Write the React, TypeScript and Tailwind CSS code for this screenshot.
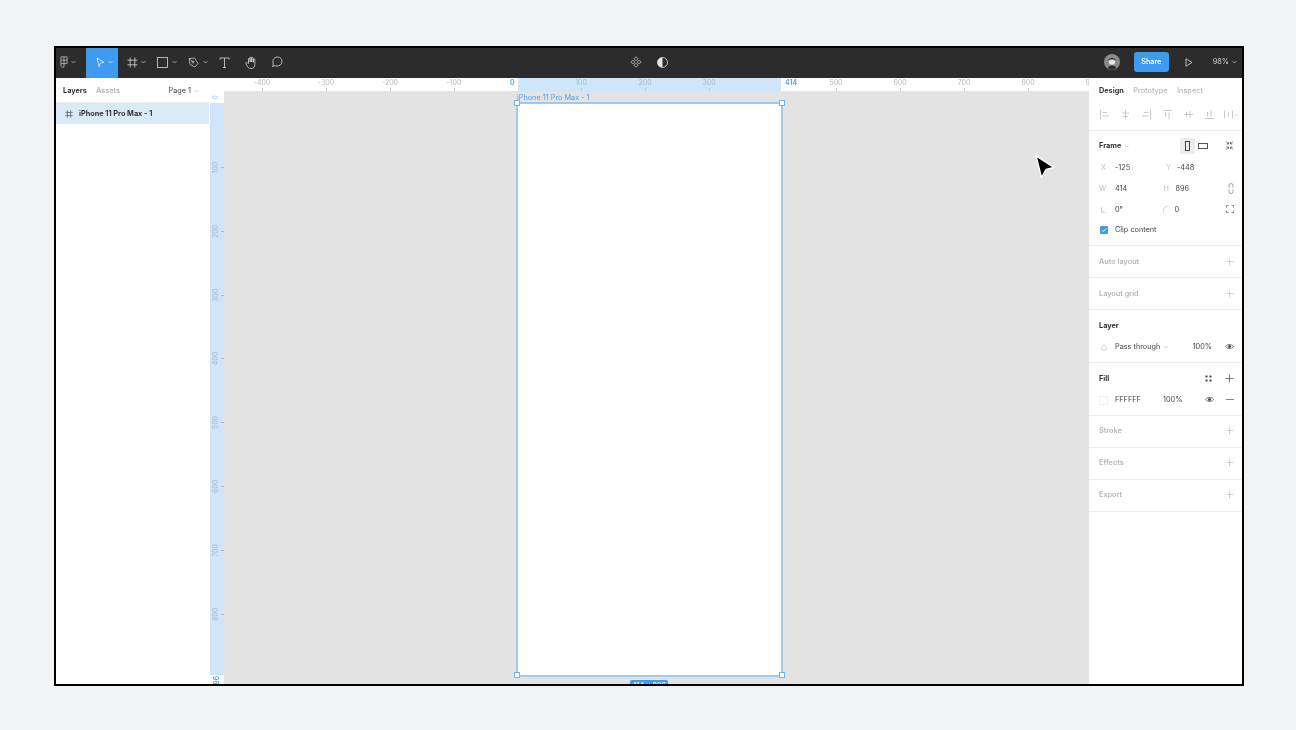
import React from "react";

const S = ({ w = 12, h = 12, vb = "0 0 12 12", c = "currentColor", sw = 0.8, children }: any) => (
  <svg width={w} height={h} viewBox={vb} fill="none" stroke={c} strokeWidth={sw} className="shrink-0">
    {children}
  </svg>
);

const Chev = ({ c = "#bdbdbd" }: { c?: string }) => (
  <svg width="5" height="4" viewBox="0 0 5 4" fill="none" stroke={c} strokeWidth="0.7" className="shrink-0">
    <path d="M0.5 1 L2.5 3 L4.5 1" />
  </svg>
);

const Plus = ({ c = "#bdbdbd" }: { c?: string }) => (
  <S w={9} h={9} vb="0 0 9 9" c={c} sw={0.7}>
    <path d="M4.5 0.5V8.5M0.5 4.5H8.5" />
  </S>
);

const Eye = () => (
  <div className="-translate-y-[1px]">
    <S w={9} h={7} vb="0 0 9 7" c="#444" sw={0.7}>
      <path d="M0.5 3.5C2.5 0.8 6.5 0.8 8.5 3.5C6.5 6.2 2.5 6.2 0.5 3.5Z" />
      <circle cx="4.5" cy="3.5" r="1.2" fill="#444" />
    </S>
  </div>
);

const Tool = ({ w, active, cls = "", children }: any) => (
  <div className={`h-full flex items-center justify-center gap-[3px] shrink-0 ${active ? "bg-[#3f9bf0]" : ""} ${cls}`} style={{ width: w }}>
    {children}
  </div>
);

const Section = ({ title, cls = "" }: { title: string; cls?: string }) => (
  <div className={`h-[32px] flex items-center justify-between pl-[10px] pr-[8px] border-b border-[#ececec] shrink-0 text-[#b5b5b5] font-semibold ${cls}`}>
    <span>{title}</span>
    <Plus />
  </div>
);

const Prop = ({ l, v, w = 66, lw = 16 }: { l: React.ReactNode; v: string; w?: number; lw?: number }) => (
  <div className="flex items-center" style={{ width: w }}>
    <span className="text-[#c4c4c4] flex items-center" style={{ width: lw }}>{l}</span>
    <span className="text-[#444]">{v}</span>
  </div>
);

const topLabels: [string, number, string][] = [
  ["-400", 38, "#b8b8b8"], ["-300", 102, "#b8b8b8"], ["-200", 166, "#b8b8b8"], ["-100", 230, "#b8b8b8"],
  ["100", 357, "#a5bccd"], ["200", 421, "#a5bccd"], ["300", 485, "#a5bccd"],
  ["500", 612, "#b8b8b8"], ["600", 676, "#b8b8b8"], ["700", 740, "#b8b8b8"], ["800", 804, "#b8b8b8"], ["900", 868, "#b8b8b8"],
];

const leftLabels: [string, number][] = [
  ["100", 64], ["200", 128], ["300", 192], ["400", 255], ["500", 319], ["600", 383], ["700", 447], ["800", 511],
];

const Handle = ({ cls }: { cls: string }) => (
  <div className={`absolute w-[6px] h-[6px] bg-white border border-[#6fb6ee] ${cls}`} />
);

export default function App() {
  return (
    <div className="w-[1296px] h-[730px] bg-[#f1f3f5] pt-[46px] pl-[54px] overflow-hidden blur-[0.35px]" style={{ fontFamily: "Inter, 'Liberation Sans', sans-serif" }}>
      <div className="w-[1190px] h-[640px] border-2 border-black bg-white flex flex-col overflow-hidden text-[7.3px] leading-none text-[#333]">
        {/* toolbar */}
        <div className="h-[30px] bg-[#2c2c2c] shrink-0 grid grid-cols-[1fr_auto_1fr] items-center">
          <div className="flex items-center h-full">
            <Tool w={30} cls="pr-[6px] pb-[2px]">
              <S w={8} h={12} vb="0 0 9 13" c="#cfcfcf" sw={0.8}>
                <path d="M1 0.7H8V4.5H1ZM4.5 0.7V12M1 4.5V8.3H8V4.5M1 8.3V10.5C1 11.6 2 12.3 3 12.3H4.5" />
              </S>
              <Chev c="#cfcfcf" />
            </Tool>
            <Tool w={32} active cls="pl-[4px] pb-[2px]">
              <S w={9} h={11} vb="0 0 9 11" c="#fff" sw={0.7}>
                <path d="M1 1L8 5.2L4.6 6L3 9.6Z" />
              </S>
              <Chev c="#fff" />
            </Tool>
            <Tool w={32} cls="pl-[5px] pb-[2px]">
              <S w={11} h={11} vb="0 0 11 11" c="#d8d8d8" sw={0.8}>
                <path d="M3.2 0.5V10.5M7.8 0.5V10.5M0.5 3.2H10.5M0.5 7.8H10.5" />
              </S>
              <Chev c="#cfcfcf" />
            </Tool>
            <Tool w={31} cls="pl-[2px] gap-[4px] pb-[2px]">
              <S w={11} h={11} vb="0 0 11 11" c="#d8d8d8" sw={0.8}>
                <rect x="0.5" y="0.5" width="10" height="10" />
              </S>
              <Chev c="#cfcfcf" />
            </Tool>
            <Tool w={29} cls="pl-[4px] gap-[4px] pb-[2px]">
              <S w={11} h={11} vb="0 0 11 11" c="#d8d8d8" sw={0.7}>
                <path d="M1 1.5L6.5 1L10 6.5L7 10L2 7.5ZM1 1.5L4.5 4.5" />
                <circle cx="5" cy="5" r="1" />
              </S>
              <Chev c="#cfcfcf" />
            </Tool>
            <Tool w={28} cls="pb-[2px]">
              <S w={11} h={11} vb="0 0 11 11" c="#d8d8d8" sw={0.8}>
                <path d="M1 2.5V1H10V2.5M5.5 1V10.5M4 10.5H7" />
              </S>
            </Tool>
            <Tool w={26} cls="pb-[2px]">
              <S w={12} h={13} vb="0 0 12 13" c="#d8d8d8" sw={0.8}>
                <path d="M3.5 7.5V3a.8.8 0 0 1 1.6 0V6M5.1 6V1.8a.8.8 0 0 1 1.6 0V6M6.7 6V2.4a.8.8 0 0 1 1.6 0V6.3M8.3 6.3V3.6a.8.8 0 0 1 1.6 0V8.5C9.9 11 8.3 12.5 6 12.5C3.8 12.5 2.8 11.2 1.8 9.4L0.8 7.6C0.4 6.8 1.5 6 2.2 6.7L3.5 8" />
              </S>
            </Tool>
            <Tool w={26} cls="pb-[2px]">
              <S w={12} h={12} vb="0 0 12 12" c="#d8d8d8" sw={0.8}>
                <path d="M1.5 10.5L2.4 8C1.2 5.6 2 1 6.5 1C9.5 1 11 3.2 11 5.5C11 8.5 8.5 10.2 6 10C5.2 10 4.5 9.8 4 9.6Z" />
              </S>
            </Tool>
          </div>
          <div className="flex items-center gap-[15px] pb-[2px]">
            <S w={12} h={12} vb="0 0 12 12" c="#d8d8d8" sw={0.7}>
              <path d="M6 0.8L8 2.8L6 4.8L4 2.8ZM2.8 4L4.8 6L2.8 8L0.8 6ZM9.2 4L11.2 6L9.2 8L7.2 6ZM6 7.2L8 9.2L6 11.2L4 9.2Z" />
            </S>
            <svg width="11" height="11" viewBox="0 0 11 11" className="shrink-0">
              <circle cx="5.5" cy="5.5" r="5" fill="#2c2c2c" stroke="#e6e6e6" strokeWidth="0.8" />
              <path d="M5.5 0.5A5 5 0 0 0 5.5 10.5Z" fill="#e6e6e6" />
            </svg>
          </div>
          <div className="flex items-center justify-end h-full pr-[5px] pb-[2px]">
            <svg width="16" height="16" viewBox="0 0 16 16" className="shrink-0 mr-[14px]">
              <circle cx="8" cy="8" r="8" fill="#8a8a8a" />
              <circle cx="8" cy="7.5" r="3.2" fill="#e4e4e4" />
              <path d="M4.5 6.5C4.5 3 11.5 3 11.5 6.5C10 5 6 5 4.5 6.5Z" fill="#222" />
              <path d="M4 14C5 10.8 11 10.8 12 14C10.5 16.2 5.5 16.2 4 14Z" fill="#2a2a2a" />
            </svg>
            <div className="w-[35px] h-[20px] rounded-[3px] bg-[#3f9bf0] text-white flex items-center justify-center font-medium mr-[16px]">Share</div>
            <S w={8} h={9} vb="0 0 8 9" c="#d8d8d8" sw={0.8}>
              <path d="M1 0.8L7 4.5L1 8.2Z" />
            </S>
            <span className="text-[#d4d4d4] ml-[20px] mr-[3px]">98%</span>
            <Chev c="#cfcfcf" />
          </div>
        </div>

        {/* body */}
        <div className="flex flex-1 min-h-0">
          {/* layers */}
          <div className="w-[154px] shrink-0 bg-white flex flex-col">
            <div className="h-[25px] flex items-center pl-[7px] pr-[11px] pt-[1px] border-b border-[#ececec] shrink-0">
              <span className="font-bold text-[#333]">Layers</span>
              <span className="ml-[9px] text-[#b8b8b8] font-semibold">Assets</span>
              <span className="ml-auto text-[#444] mr-[3px]">Page 1</span>
              <Chev />
            </div>
            <div className="h-[21px] w-[153px] bg-[#d9eaf7] flex items-center pl-[9px] gap-[6px] font-bold text-[#333]">
              <S w={8} h={8} vb="0 0 8 8" c="#555" sw={0.7}>
                <path d="M2.4 0.3V7.7M5.6 0.3V7.7M0.3 2.4H7.7M0.3 5.6H7.7" />
              </S>
              <span>iPhone 11 Pro Max - 1</span>
            </div>
          </div>

          {/* center */}
          <div className="flex-1 min-w-0 flex flex-col">
            {/* top ruler */}
            <div className="h-[13px] shrink-0 relative flex text-[7px] bg-white overflow-hidden">
              <div className="w-[308px] shrink-0" />
              <div className="w-[263px] shrink-0 bg-[#cfe6fa]" />
              {topLabels.map(([t, x, c]) => (
                <React.Fragment key={t}>
                  <span className="absolute top-[1px] -translate-x-1/2" style={{ left: x + 14, color: c }}>{t}</span>
                  <span className="absolute top-[10px] w-px h-[3px] bg-[#c8c8c8]" style={{ left: x + 14 }} />
                </React.Fragment>
              ))}
              <span className="absolute top-[1px] left-[300px] font-semibold text-[#4aa3ee]">0</span>
              <span className="absolute top-[1px] left-[575px] font-semibold text-[#4aa3ee]">414</span>
            </div>
            <div className="flex-1 min-h-0 flex">
              {/* left ruler */}
              <div className="w-[14px] shrink-0 relative overflow-hidden flex flex-col text-[7px] text-[#a5bccd]">
                <div className="h-[12px] shrink-0 bg-white" />
                <div className="flex-1 bg-[#cfe6fa]" />
                <div className="h-[9px] shrink-0 bg-white" />
                <span className="absolute left-[3px] top-[3px] -rotate-90 text-[#a9cdec] leading-none">0</span>
                {leftLabels.map(([t, y]) => (
                  <React.Fragment key={t}>
                    <span className="absolute left-[-3px] w-[16px] text-center -rotate-90" style={{ top: y + 9 }}>{t}</span>
                    <span className="absolute left-[11px] h-px w-[3px] bg-[#b0bcc6]" style={{ top: y + 12 }} />
                  </React.Fragment>
                ))}
                <span className="absolute left-[-2px] w-[16px] text-center top-[588px] -rotate-90 font-semibold text-[#4aa3ee]">896</span>
              </div>
              {/* canvas */}
              <div className="flex-1 min-w-0 bg-[#e3e3e3] relative overflow-hidden">
                <span className="absolute left-[293px] top-[3px] text-[#4aa3ee]">iPhone 11 Pro Max - 1</span>
                <div className="absolute left-[292px] top-[11px] w-[267px] h-[575px] bg-[#9ccbf0] p-[2px]">
                  <div className="w-full h-full bg-white" />
                  <Handle cls="-left-[2px] -top-[2px]" />
                  <Handle cls="-right-[2px] -top-[2px]" />
                  <Handle cls="-left-[2px] -bottom-[1px]" />
                  <Handle cls="-right-[2px] -bottom-[1px]" />
                </div>
                <div className="absolute left-[406px] top-[589px] w-[38px] h-[11px] rounded-[2px] bg-[#3f9bf0] text-white font-semibold text-center pt-[2px] text-[7px]">414 × 896</div>
                {/* cursor */}
                <svg width="24" height="26" viewBox="0 0 24 26" className="absolute left-[809px] top-[63px]">
                  <path d="M3 2L21 13.5L13 15.5L8.5 23.5Z" fill="#000" stroke="#fff" strokeWidth="1.4" strokeLinejoin="round" />
                </svg>
              </div>
            </div>
          </div>

          {/* properties */}
          <div className="w-[153px] shrink-0 bg-white flex flex-col">
            <div className="h-[53px] border-b border-[#ececec] shrink-0 flex flex-col">
              <div className="h-[25px] pt-[1px] flex items-center pl-[10px] gap-[9.5px] font-medium text-[#b8b8b8] shrink-0">
                <span className="font-bold text-[#333]">Design</span>
                <span>Prototype</span>
                <span>Inspect</span>
              </div>
              <div className="flex items-center pl-[11px] gap-[12px] mt-[7px] text-[#bdbdbd]">
                {["M0.5 0V9M2.5 2.5H7M2.5 6H9", "M4.5 0V9M1 3H8M2 6.5H7", "M8.5 0V9M2 2.5H6.5M0 6H6.5", "M0 0.5H9M2.5 2.5V7M6 2.5V9", "M0 4.5H9M2.5 2V7M6 1V8", "M0 8.5H9M2.5 2V6.5M6 0V6.5"].map((d) => (
                  <S key={d} w={9} h={9} vb="0 0 9 9" c="#bdbdbd" sw={0.8}>
                    <path d={d} />
                  </S>
                ))}
                <div className="flex items-center gap-[1px] -ml-[2px]">
                  <S w={9} h={9} vb="0 0 9 9" c="#bdbdbd" sw={0.8}>
                    <path d="M0.5 0.5V8.5M4.5 2.5V6.5M8.5 0.5V8.5" />
                  </S>
                  <Chev />
                </div>
              </div>
            </div>

            <div className="h-[115px] border-b border-[#ececec] shrink-0 pl-[10px] pr-[8px] flex flex-col">
              <div className="h-[20px] mt-[5px] flex items-center shrink-0">
                <span className="font-bold text-[#333] mr-[3px]">Frame</span>
                <Chev />
                <div className="ml-[51px] w-[15px] h-[16px] bg-[#ececec] flex items-center justify-center">
                  <div className="w-[5px] h-[10px] border border-[#444]" />
                </div>
                <div className="ml-[3px] w-[10px] h-[6px] border border-[#555]" />
                <div className="ml-auto -translate-y-[1px]">
                  <S w={9} h={9} vb="0 0 9 9" c="#555" sw={0.8}>
                    <path d="M1 0.5L3.5 3M3.5 1V3H1.5M8 0.5L5.5 3M5.5 1V3H7.5M1 8.5L3.5 6M3.5 8V6H1.5M8 8.5L5.5 6M5.5 8V6H7.5" />
                  </S>
                </div>
              </div>
              <div className="h-[21px] mt-[1px] flex items-center shrink-0">
                <Prop l={<span className="pl-[2px]">X</span>} v="-125" />
                <Prop l={<span className="pl-[1px]">Y</span>} v="-448" lw={12} />
              </div>
              <div className="h-[21px] flex items-center shrink-0">
                <Prop l="W" v="414" />
                <Prop l={<span>H</span>} v="896" lw={12} />
                <div className="ml-auto">
                  <S w={6} h={11} vb="0 0 6 11" c="#777" sw={0.7}>
                    <path d="M1 4.5V2.5a2 2 0 0 1 4 0V4.5M1 6.5V8.5a2 2 0 0 0 4 0V6.5" />
                  </S>
                </div>
              </div>
              <div className="h-[21px] flex items-center shrink-0">
                <Prop l={<S w={7} h={7} vb="0 0 7 7" c="#c4c4c4" sw={0.7}><path d="M2.5 1V6.5H6.5M2.5 3.5L5 6.5" /></S>} v="0°" />
                <Prop l={<S w={7} h={7} vb="0 0 7 7" c="#c4c4c4" sw={0.7}><path d="M0.5 6.5V4a3.5 3.5 0 0 1 3.5-3.5H6.5" /></S>} v="0" lw={12} />
                <div className="ml-auto -translate-y-[1px]">
                  <S w={8} h={8} vb="0 0 8 8" c="#666" sw={0.8}>
                    <path d="M0.5 2.5V0.5H2.5M5.5 0.5H7.5V2.5M7.5 5.5V7.5H5.5M2.5 7.5H0.5V5.5" />
                  </S>
                </div>
              </div>
              <div className="h-[20px] flex items-center gap-[7px] shrink-0 text-[#444]">
                <div className="w-[8px] h-[8px] rounded-[1px] bg-[#3f9bf0] flex items-center justify-center ml-[1px]">
                  <S w={6} h={6} vb="0 0 6 6" c="#fff" sw={1}><path d="M1 3L2.5 4.5L5 1.5" /></S>
                </div>
                <span>Clip content</span>
              </div>
            </div>

            <Section title="Auto layout" />
            <Section title="Layout grid" />

            <div className="h-[53px] border-b border-[#ececec] shrink-0 pl-[10px] pr-[8px] flex flex-col">
              <div className="h-[15px] mt-[8px] flex items-center font-bold text-[#333] shrink-0">Layer</div>
              <div className="h-[20px] mt-[4px] flex items-center text-[#444] shrink-0">
                <span className="w-[16px] pl-[2px]">
                  <S w={6} h={7} vb="0 0 6 7" c="#c4c4c4" sw={0.7}><path d="M3 0.5C4 2 5.5 3 5.5 4.3A2.5 2.5 0 0 1 0.5 4.3C0.5 3 2 2 3 0.5Z" /></S>
                </span>
                <span className="mr-[3px]">Pass through</span>
                <Chev />
                <span className="ml-auto mr-[13px]">100%</span>
                <Eye />
              </div>
            </div>

            <div className="h-[53px] border-b border-[#ececec] shrink-0 pl-[10px] pr-[8px] flex flex-col">
              <div className="h-[15px] mt-[8px] flex items-center font-bold text-[#333] shrink-0">
                <span>Fill</span>
                <div className="ml-auto mr-[13px]">
                  <S w={7} h={7} vb="0 0 7 7" c="#444" sw={0}>
                    <rect x="0.5" y="0.5" width="2" height="2" fill="#444" />
                    <rect x="4.5" y="0.5" width="2" height="2" fill="#444" />
                    <rect x="0.5" y="4.5" width="2" height="2" fill="#444" />
                    <rect x="4.5" y="4.5" width="2" height="2" fill="#444" />
                  </S>
                </div>
                <Plus c="#444" />
              </div>
              <div className="h-[20px] mt-[4px] flex items-center text-[#444] shrink-0">
                <div className="w-[9px] h-[9px] bg-white border border-[#f0f0f0] mr-[7px]" />
                <span className="w-[48px]">FFFFFF</span>
                <span>100%</span>
                <div className="ml-[23px]"><Eye /></div>
                <div className="ml-auto w-[8px] h-px bg-[#888] -translate-y-[1px]" />
              </div>
            </div>

            <Section title="Stroke" cls="pb-[2px]" />
            <Section title="Effects" cls="pb-[2px]" />
            <Section title="Export" cls="pb-[2px]" />
          </div>
        </div>
      </div>
    </div>
  );
}
